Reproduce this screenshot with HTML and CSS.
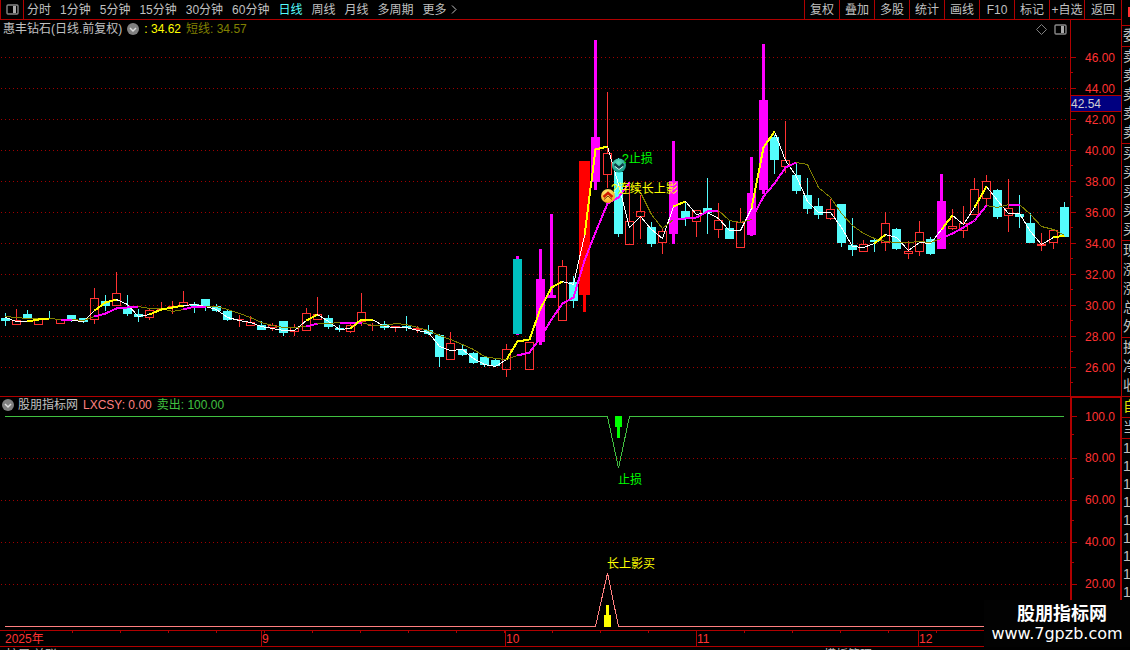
FILE: index.html
```html
<!DOCTYPE html>
<html lang="zh-CN">
<head>
  <meta charset="UTF-8">
  <meta name="viewport" content="width=device-width, initial-scale=1.0">
  <title>惠丰钻石 日线</title>
  <link rel="stylesheet" href="styles.css">
</head>
<body>
  <div class="workspace">
    <header class="toolbar">
      <button class="layout-btn" aria-label="布局">
        <svg width="13" height="11" viewBox="0 0 13 11"><rect x="1" y="1" width="11" height="9" rx="1" fill="none" stroke="#888" stroke-width="1.4"/><rect x="7" y="2" width="3" height="7" fill="#aaa"/></svg>
      </button>
      <nav class="periods">
        <button>分时</button>
        <button>1分钟</button>
        <button>5分钟</button>
        <button>15分钟</button>
        <button>30分钟</button>
        <button>60分钟</button>
        <button class="active">日线</button>
        <button>周线</button>
        <button>月线</button>
        <button>多周期</button>
        <button class="more">更多 <svg width="6" height="9" viewBox="0 0 6 9"><path d="M1 0.5L5 4.5L1 8.5" fill="none" stroke="#c0c0c0"/></svg></button>
      </nav>
      <div class="tools">
        <button>复权</button>
        <button>叠加</button>
        <button>多股</button>
        <button>统计</button>
        <button>画线</button>
        <button>F10</button>
        <button>标记</button>
        <button>+自选</button>
        <button>返回</button>
      </div>
    </header>

    <section class="panel price-panel">
      <div class="plot">
        <div class="legend">
          <span>惠丰钻石(日线.前复权)</span>
          <svg class="toggle" width="12" height="12" viewBox="0 0 12 12"><circle cx="6" cy="6" r="6" fill="#808080"/><path d="M3 5L6 8L9 5" fill="none" stroke="#ddd" stroke-width="1.5"/></svg>
          <span class="short">: 34.62</span>
          <span class="long">短线: 34.57</span>
          <svg class="diamond" width="11" height="11" viewBox="0 0 11 11"><path d="M5.5 0.5L10.5 5.5L5.5 10.5L0.5 5.5Z" fill="none" stroke="#808080"/></svg>
          <svg width="13" height="11" viewBox="0 0 13 11"><rect x="1" y="1" width="11" height="9" rx="1" fill="none" stroke="#888" stroke-width="1.4"/><rect x="7" y="2" width="3" height="7" fill="#aaa"/></svg>
        </div>
        <svg class="price-chart" id="priceChart" viewBox="0 38 1070 358" preserveAspectRatio="none">
          <defs>
            <radialGradient id="teal" cx="45%" cy="30%" r="70%">
              <stop offset="0" stop-color="#5fe0c0"/>
              <stop offset="1" stop-color="#0c9080"/>
            </radialGradient>
            <radialGradient id="gold" cx="45%" cy="30%" r="70%">
              <stop offset="0" stop-color="#fff080"/>
              <stop offset="1" stop-color="#f8a818"/>
            </radialGradient>
          </defs>
          <g id="priceGrid" class="grid"></g>
          <g id="candles" class="crisp"></g>
          <g id="averages" class="averages crisp"></g>
          <g id="signals">
            <circle cx="619" cy="165.500" r="7" fill="url(#teal)"/>
            <path d="M614.500 164L619 168L623.500 164" fill="none" stroke="#123c48" stroke-width="2.500"/>
            <path d="M615 166.500L619 169.500L623 166.500" fill="none" stroke="#d8f4f0"/>
            <circle cx="608" cy="196" r="7" fill="url(#gold)"/>
            <path d="M603.500 197L608 193L612.500 197" fill="none" stroke="#d01800" stroke-width="2.500"/>
            <path d="M604 199.500L608 196L612 199.500" fill="none" stroke="#803000"/>
            <text x="622" y="163" class="sell">?止损</text>
            <text x="611" y="193" class="buy">?连续长上影</text>
          </g>
        </svg>
      </div>
      <div class="axis">
        <ul class="ticks">
          <li>46.00</li>
          <li>44.00</li>
          <li>42.00</li>
          <li>40.00</li>
          <li>38.00</li>
          <li>36.00</li>
          <li>34.00</li>
          <li>32.00</li>
          <li>30.00</li>
          <li>28.00</li>
          <li>26.00</li>
        </ul>
        <div class="cursor-price">42.54</div>
      </div>
    </section>

    <section class="panel indicator-panel">
      <div class="plot">
        <div class="legend">
          <svg class="toggle" width="12" height="12" viewBox="0 0 12 12"><circle cx="6" cy="6" r="6" fill="#808080"/><path d="M3 5L6 8L9 5" fill="none" stroke="#ddd" stroke-width="1.5"/></svg>
          <span>股朋指标网</span>
          <span class="lxcsy">LXCSY: 0.00</span>
          <span class="out">卖出: 100.00</span>
        </div>
        <svg class="indicator-chart" viewBox="0 413 1070 217" preserveAspectRatio="none">
          <g id="indicatorGrid" class="grid"></g>
          <g class="crisp">
            <path d="M5 416.500H607.500L618.500 468L629.500 416.500H1064" fill="none" stroke="#40c040"/>
            <path d="M5 626.500H595.500L607.500 573L618.500 626.500H1070" fill="none" stroke="#ff8080"/>
            <path d="M615 416h7v11h-2v11h-3v-11h-2z" fill="#00ff00"/>
            <path d="M604 627v-12h2v-10h3v10h2v12z" fill="#ffff00"/>
          </g>
          <text x="618" y="484" class="sell">止损</text>
          <text x="607" y="568" class="buy">长上影买</text>
        </svg>
      </div>
      <div class="axis">
        <ul class="ticks">
          <li>100.0</li>
          <li>80.00</li>
          <li>60.00</li>
          <li>40.00</li>
          <li>20.00</li>
        </ul>
      </div>
    </section>

    <div class="dates" id="dates"></div>
    <footer class="tabs">
      <span>扩展 关联</span>
      <span class="tabs-right">模板管理</span>
    </footer>
  </div>

  <aside class="quotes">
    <div class="group top"></div>
    <div class="group"><span>委</span></div>
    <div class="group"><span>卖</span><span>卖</span><span>卖</span><span>卖</span><span>卖</span></div>
    <div class="group"><span>买</span><span>买</span><span>买</span><span>买</span><span>买</span></div>
    <div class="group"><span>现</span><span>涨</span><span>涨</span><span>总</span><span>外</span></div>
    <div class="group"><span>换</span><span>净</span><span>收</span></div>
    <div class="group own"><span>自</span></div>
    <div class="group"><span>当</span></div>
    <div class="group times"><span>1</span><span>1</span><span>1</span><span>1</span><span>1</span><span>1</span><span>1</span><span>1</span><span>1</span></div>
  </aside>

  <div class="watermark">
    <strong>股朋指标网</strong>
    <span>www.7gpzb.com</span>
  </div>

  <script src="script.js"></script>
</body>
</html>
```
FILE: styles.css
```css
* {
  box-sizing: border-box;
}

body {
  margin: 0;
  height: 100vh;
  overflow: hidden;
  display: grid;
  grid-template-columns: minmax(0, 1fr) 8px;
  background: #000;
  color: #c0c0c0;
  font-family: "Liberation Sans", "Noto Sans CJK SC", sans-serif;
  font-size: 12px;
  line-height: 16px;
}

button {
  padding: 0;
  border: 0;
  background: none;
  color: inherit;
  font: inherit;
  white-space: nowrap;
  cursor: pointer;
}

svg {
  display: block;
}

.workspace {
  min-width: 0;
}

.toolbar {
  display: flex;
  height: 20px;
  border-bottom: 1px solid #b00000;
}

.layout-btn {
  display: flex;
  align-items: center;
  justify-content: center;
  width: 24px;
  border-left: 1px solid #b00000;
  border-right: 1px solid #b00000;
}

.periods {
  display: flex;
  gap: 9px;
  margin-left: 3px;
}

.periods .active {
  color: #54fcfc;
}

.more {
  display: flex;
  align-items: center;
  gap: 4px;
}

.tools {
  display: flex;
  margin-left: auto;
  border-right: 1px solid #b00000;
}

.tools button {
  width: 35px;
  border-left: 1px solid #b00000;
}

.tools button:last-child {
  width: 37px;
}

.panel {
  display: grid;
  grid-template-columns: minmax(0, 1fr) 52px;
}

.price-panel {
  border-bottom: 1px solid #b00000;
}

.legend {
  display: flex;
  align-items: center;
  gap: 5px;
  height: 18px;
  padding: 0 3px;
}

.indicator-panel .legend {
  height: 16px;
  padding: 0 2px;
}

.indicator-panel .toggle {
  margin-right: -1px;
}

.short {
  color: #ffff00;
}

.long {
  color: #808000;
}

.lxcsy {
  color: #ff8080;
}

.out {
  color: #40c040;
}

.diamond {
  margin-left: auto;
  margin-right: 2px;
}

.price-chart,
.indicator-chart {
  width: 100%;
}

.price-chart {
  height: 358px;
}

.indicator-chart {
  height: 217px;
}

.crisp,
.grid {
  shape-rendering: crispEdges;
}

.grid line {
  stroke: #a00000;
  stroke-dasharray: 1 3;
}

.averages polyline {
  fill: none;
}

.sell {
  fill: #00ff00;
}

.buy {
  fill: #ffff00;
}

.axis {
  position: relative;
  border-left: 1px solid #b00000;
  border-right: 1px solid #b00000;
  color: #ff3232;
}

.ticks {
  margin: 0;
  padding: 22px 0 0;
  list-style: none;
}

.ticks li {
  display: flex;
  align-items: center;
  gap: 9px;
  height: 31px;
  background: linear-gradient(#b00000, #b00000) left bottom / 2px 1px no-repeat;
}

.ticks li::before {
  content: "";
  width: 5px;
  height: 1px;
  background: #b00000;
}

.cursor-price {
  position: absolute;
  top: 75px;
  left: 0;
  right: 0;
  height: 17px;
  border-top: 1px solid #b00000;
  border-bottom: 1px solid #b00000;
  background: #000080;
  color: #d0d0d0;
}

.indicator-panel .axis {
  border-width: 2px;
  border-top: 1px solid #b00000;
}

.indicator-panel .ticks {
  padding: 0;
}

.indicator-panel .ticks li {
  height: 42px;
  gap: 8px;
}

.indicator-panel .ticks li:first-child {
  height: 37px;
  margin-bottom: 2px;
}

.dates {
  display: flex;
  height: 17px;
  border-top: 1px solid #b00000;
  border-bottom: 1px solid #b00000;
  background: repeating-linear-gradient(90deg, transparent 0 24px, #b00000 24px 25px, transparent 25px 48px) top / 100% 2px no-repeat;
  color: #ff3232;
}

.dates span {
  border-left: 1px solid #b00000;
  white-space: nowrap;
}

.dates span:first-child {
  padding-left: 5px;
  border-left: 0;
}

.tabs {
  display: flex;
  justify-content: space-between;
  padding: 0 250px 0 6px;
}

.quotes {
  overflow: hidden;
  font-size: 14px;
  line-height: 19px;
}

.group {
  padding-bottom: 1px;
  border-bottom: 1px solid #b00000;
}

.group span {
  display: block;
  width: 20px;
  padding-left: 1px;
}

.group.top {
  height: 26px;
  padding: 7px 0 8px 6px;
}

.group.top::before {
  content: "";
  display: block;
  height: 10px;
  background: #ff3232;
}

.own {
  color: #e0e000;
}

.times {
  border: 0;
  line-height: 18px;
}

.watermark {
  position: absolute;
  left: calc(100% - 146px);
  top: 600px;
  width: 146px;
  height: 47px;
  display: flex;
  flex-direction: column;
  align-items: center;
  background: #020202;
  color: #fff;
  padding-top: 5px;
}

.watermark strong {
  font-size: 18px;
  line-height: 19px;
  padding-left: 10px;
}

.watermark span {
  font-family: "DejaVu Sans", sans-serif;
  font-size: 16px;
  line-height: 19px;
}
```
FILE: script.js
```js
const SVG_NS = 'http://www.w3.org/2000/svg';

// kind, high, body top, body bottom, low
// d = down, u = up, m = magenta, t = teal, r = limit up
const candles = [
  ['d', 313, 318, 321, 326], ['u', 309, 320, 325, 325], ['d', 310, 314, 318, 318], ['u', 318, 318, 325, 325],
  ['d', 311, 318, 319, 319], ['u', 319, 319, 324, 324], ['d', 315, 315, 319, 322], ['d', 318, 318, 322, 323],
  ['u', 288, 298, 320, 324], ['d', 295, 301, 306, 311], ['u', 272, 293, 306, 306], ['d', 295, 308, 314, 316],
  ['d', 309, 314, 317, 322], ['u', 308, 310, 318, 320], ['u', 302, 309, 310, 310], ['u', 301, 306, 308, 314],
  ['u', 291, 302, 306, 306], ['d', 302, 304, 306, 313], ['d', 299, 299, 306, 311], ['d', 304, 306, 311, 312],
  ['d', 310, 311, 320, 321], ['u', 315, 319, 320, 327], ['u', 316, 322, 326, 326], ['d', 321, 325, 330, 330],
  ['u', 323, 325, 328, 331], ['d', 321, 321, 333, 336], ['u', 324, 327, 332, 336], ['u', 308, 313, 331, 331],
  ['u', 297, 314, 320, 320], ['d', 315, 318, 327, 329], ['d', 325, 328, 330, 332], ['u', 323, 325, 332, 333],
  ['u', 293, 312, 322, 326], ['u', 323, 325, 326, 331], ['d', 321, 324, 328, 330], ['u', 326, 326, 327, 332],
  ['d', 316, 326, 328, 331], ['u', 326, 328, 330, 333], ['d', 325, 330, 334, 335], ['d', 334, 335, 357, 367],
  ['u', 332, 343, 360, 360], ['d', 344, 349, 355, 356], ['d', 352, 353, 363, 364], ['d', 356, 357, 365, 367],
  ['d', 359, 360, 366, 367], ['u', 344, 349, 370, 377], ['t', 256, 259, 334, 335], ['u', 342, 342, 370, 370],
  ['m', 249, 279, 342, 345], ['m', 214, 295, 298, 298], ['u', 260, 266, 321, 321], ['d', 276, 282, 301, 308],
  ['r', 161, 161, 295, 312], ['m', 40, 137, 182, 190], ['u', 92, 153, 175, 188], ['d', 158, 172, 234, 237],
  ['u', 184, 221, 245, 245], ['u', 195, 211, 217, 239], ['d', 222, 227, 244, 247], ['u', 229, 231, 243, 254],
  ['m', 141, 181, 234, 244], ['d', 201, 211, 219, 226], ['u', 210, 210, 222, 237], ['d', 178, 208, 213, 234],
  ['u', 203, 220, 230, 238], ['d', 221, 228, 239, 239], ['u', 208, 222, 248, 248], ['m', 157, 193, 235, 236],
  ['m', 44, 100, 190, 194], ['d', 135, 137, 160, 174], ['u', 121, 160, 167, 173], ['d', 163, 175, 191, 194],
  ['d', 178, 195, 209, 214], ['d', 198, 206, 215, 219], ['u', 199, 209, 219, 220], ['d', 204, 204, 243, 247],
  ['d', 218, 245, 250, 256], ['u', 240, 244, 252, 252], ['d', 238, 240, 242, 252], ['u', 212, 223, 243, 251],
  ['d', 228, 229, 249, 250], ['u', 241, 251, 254, 259], ['u', 221, 232, 252, 256], ['d', 237, 239, 254, 255],
  ['m', 174, 201, 249, 249], ['u', 209, 226, 229, 230], ['u', 206, 223, 231, 238], ['u', 178, 189, 215, 215],
  ['u', 175, 181, 199, 205], ['d', 189, 190, 217, 219], ['u', 179, 208, 216, 232], ['d', 195, 214, 217, 228],
  ['d', 213, 223, 243, 243], ['u', 233, 244, 246, 251], ['u', 230, 230, 243, 249], ['d', 202, 207, 237, 237]
];

const shortLine = [
  317, 321, 321, 319, 318, 319, 320, 321, 310, 302, 299, 304, 316, 314, 309, 307, 305, 304, 306, 309,
  317, 320, 322, 326, 328, 330, 330, 320, 314, 321, 329, 328, 319, 319, 326, 327, 327, 330, 332, 346,
  350, 349, 358, 364, 366, 359, 341, 339, 308, 287, 281, 284, 235, 149, 146, 184, 227, 216, 229, 238,
  206, 201, 214, 212, 218, 230, 230, 208, 147, 131, 160, 176, 201, 212, 212, 227, 246, 247, 243, 234,
  237, 250, 242, 243, 229, 215, 224, 207, 186, 200, 213, 213, 231, 244, 237, 235
];

const longLine = [
  316, 317, 318, 318, 318, 319, 319, 320, 316, 313, 308, 307, 306, 308, 308, 311, 309, 306, 306, 306,
  309, 313, 317, 322, 325, 327, 327, 326, 323, 323, 322, 322, 322, 325, 325, 323, 324, 327, 330, 335,
  339, 344, 349, 356, 358, 359, 355, 352, 337, 319, 303, 297, 260, 232, 203, 197, 182, 192, 214, 228,
  219, 218, 217, 211, 210, 220, 222, 219, 196, 183, 167, 162, 164, 187, 197, 213, 225, 233, 238, 241,
  242, 242, 241, 242, 238, 233, 227, 220, 205, 207, 204, 204, 214, 226, 229, 235
];

// index ranges where a line is rising and drawn thick
const shortRising = [[2, 4], [8, 10], [13, 16], [27, 28], [31, 33], [45, 50], [52, 54], [60, 61], [67, 69], [78, 79], [84, 85], [87, 88], [94, 95]];
const longRising = [[5, 6], [8, 12], [16, 18], [27, 28], [30, 32], [46, 56], [60, 64], [67, 71], [84, 88], [90, 91]];

const colors = { d: '#54fcfc', u: '#ff3232', m: '#ff00ff', t: '#00c0c0', r: '#ff0000' };

const months = [['2025年', 261], ['9', 244], ['10', 191], ['11', 222], ['12', 204]];
const totalWidth = months.reduce((sum, [, width]) => sum + width, 0);

function add(parent, name, attrs) {
  const el = document.createElementNS(SVG_NS, name);
  for (const key in attrs) el.setAttribute(key, attrs[key]);
  parent.appendChild(el);
}

function xAt(i) {
  return Math.floor(5 + i * 11.149);
}

function drawGrid(id, from, to, step) {
  const grid = document.getElementById(id);
  for (let y = from; y <= to; y += step) {
    add(grid, 'line', { x1: 1, x2: 1067, y1: y + 0.5, y2: y + 0.5 });
  }
}

function drawCandle(parent, [kind, high, top, bottom, low], i) {
  const x = xAt(i);
  const fill = colors[kind];
  if (kind === 'u') {
    add(parent, 'rect', { x, y: high, width: 1, height: top - high, fill });
    add(parent, 'rect', { x, y: bottom, width: 1, height: low - bottom, fill });
    add(parent, 'rect', { x: x - 3.5, y: top + 0.5, width: 8, height: Math.max(bottom - top - 1, 0.1), fill: 'none', stroke: fill });
    return;
  }
  const thin = kind === 'd';
  const half = kind === 'r' ? 5 : 4;
  add(parent, 'rect', { x: thin ? x : x - 1, y: high, width: thin ? 1 : 3, height: low - high, fill: kind === 't' ? colors.m : fill });
  add(parent, 'rect', { x: x - half, y: top, width: half * 2 + 1, height: bottom - top, fill });
}

function drawLine(parent, values, from, to, stroke, width) {
  const points = [];
  for (let i = from; i <= to; i++) points.push((xAt(i) + 0.5) + ',' + (values[i] + 0.5));
  add(parent, 'polyline', { points: points.join(' '), stroke, 'stroke-width': width });
}

drawGrid('priceGrid', 57, 367, 31);
drawGrid('indicatorGrid', 458, 584, 42);

const candleGroup = document.getElementById('candles');
candles.forEach((candle, i) => drawCandle(candleGroup, candle, i));

const averages = document.getElementById('averages');
drawLine(averages, shortLine, 0, 95, '#ffffff', 1);
drawLine(averages, longLine, 0, 95, '#808000', 1);
longRising.forEach(([from, to]) => drawLine(averages, longLine, from, to, '#ff00ff', 2));
shortRising.forEach(([from, to]) => drawLine(averages, shortLine, from, to, '#ffff00', 2));

const dates = document.getElementById('dates');
months.forEach(([label, width]) => {
  const span = document.createElement('span');
  span.textContent = label;
  span.style.width = (width / totalWidth * 100) + '%';
  dates.appendChild(span);
});
```
